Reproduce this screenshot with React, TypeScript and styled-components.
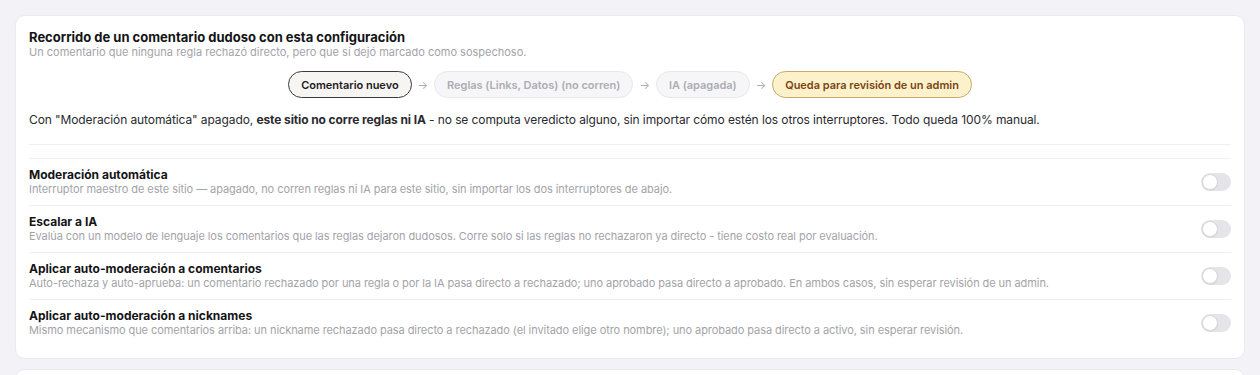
import React from "react";
import styled, { createGlobalStyle } from "styled-components";

const GlobalStyle = createGlobalStyle`
  html, body {
    margin: 0;
    padding: 0;
    background: #f3f3f7;
    font-family: Inter, "Noto Sans", "Liberation Sans", sans-serif;
    -webkit-font-smoothing: antialiased;
  }
`;

const Page = styled.div`
  padding: 15px;
  display: flex;
  flex-direction: column;
  gap: 10px;
`;

const Card = styled.section`
  background: #ffffff;
  border: 1px solid #ebebef;
  border-radius: 10px;
  padding: 13px 13px 12px;
`;

const Intro = styled.div`
  padding-bottom: 15px;
  border-bottom: 1px solid #f0f0f3;
`;

const Title = styled.h3`
  margin: 0;
  font-size: 13px;
  line-height: 16px;
  font-weight: 700;
  color: #141416;
`;

const Subtitle = styled.p`
  margin: 0;
  font-size: 11px;
  line-height: 15px;
  color: #a3a3a9;
`;

const Flow = styled.div`
  display: flex;
  justify-content: center;
  align-items: center;
  gap: 6px;
  margin-top: 11px;
`;

type Tone = "start" | "off" | "end";

const Pill = styled.span<{ $tone: Tone }>`
  display: inline-flex;
  align-items: center;
  height: 27px;
  box-sizing: border-box;
  padding: 0 12px;
  border-radius: 999px;
  font-size: 11px;
  font-weight: 600;
  letter-spacing: -0.02px;
  white-space: nowrap;
  border: 1px solid
    ${({ $tone }) => ($tone === "start" ? "#3a3a3e" : $tone === "end" ? "#caa868" : "#e8e8ec")};
  background: ${({ $tone }) => ($tone === "start" ? "#f7f5f2" : $tone === "end" ? "#fdf1cc" : "#f6f6f8")};
  color: ${({ $tone }) => ($tone === "start" ? "#1b1b1e" : $tone === "end" ? "#7a4513" : "#adadb3")};
`;

const Arrow = styled.span`
  font-size: 11px;
  color: #aeaeb4;
`;

const Note = styled.p`
  margin: 13px 0 0;
  font-size: 12px;
  line-height: 18px;
  letter-spacing: -0.1px;
  color: #2a2a2e;

  strong {
    font-weight: 700;
  }
`;

const Rows = styled.div`
  margin-top: 13px;
`;

const Row = styled.div`
  display: flex;
  align-items: center;
  gap: 16px;
  padding: 8px 0;
  border-top: 1px solid #f0f0f3;
`;

const RowText = styled.div`
  flex: 1;
`;

const RowTitle = styled.div`
  font-size: 12px;
  line-height: 15px;
  font-weight: 700;
  color: #141416;
`;

const RowDesc = styled.div`
  font-size: 11px;
  line-height: 15px;
  letter-spacing: -0.07px;
  color: #a3a3a9;
`;

const Track = styled.span<{ $on: boolean }>`
  position: relative;
  flex: none;
  width: 30px;
  height: 18px;
  border-radius: 9px;
  background: ${({ $on }) => ($on ? "#34c759" : "#e5e5e9")};
`;

const Knob = styled.span<{ $on: boolean }>`
  position: absolute;
  top: 1px;
  left: ${({ $on }) => ($on ? "13px" : "1px")};
  width: 16px;
  height: 16px;
  box-sizing: border-box;
  border-radius: 50%;
  background: #ffffff;
  border: 1px solid #d6d6db;
  box-shadow: 0 1px 1px rgba(0, 0, 0, 0.06);
`;

const Switch: React.FC<{ on: boolean }> = ({ on }) => (
  <Track $on={on}>
    <Knob $on={on} />
  </Track>
);

const steps: { label: string; tone: Tone }[] = [
  { label: "Comentario nuevo", tone: "start" },
  { label: "Reglas (Links, Datos) (no corren)", tone: "off" },
  { label: "IA (apagada)", tone: "off" },
  { label: "Queda para revisión de un admin", tone: "end" },
];

const settings = [
  {
    title: "Moderación automática",
    desc: "Interruptor maestro de este sitio — apagado, no corren reglas ni IA para este sitio, sin importar los dos interruptores de abajo.",
  },
  {
    title: "Escalar a IA",
    desc: "Evalúa con un modelo de lenguaje los comentarios que las reglas dejaron dudosos. Corre solo si las reglas no rechazaron ya directo - tiene costo real por evaluación.",
  },
  {
    title: "Aplicar auto-moderación a comentarios",
    desc: "Auto-rechaza y auto-aprueba: un comentario rechazado por una regla o por la IA pasa directo a rechazado; uno aprobado pasa directo a aprobado. En ambos casos, sin esperar revisión de un admin.",
  },
  {
    title: "Aplicar auto-moderación a nicknames",
    desc: "Mismo mecanismo que comentarios arriba: un nickname rechazado pasa directo a rechazado (el invitado elige otro nombre); uno aprobado pasa directo a activo, sin esperar revisión.",
  },
];

export default function App() {
  return (
    <>
      <GlobalStyle />
      <Page>
        <Card>
          <Intro>
            <Title>Recorrido de un comentario dudoso con esta configuración</Title>
            <Subtitle>
              Un comentario que ninguna regla rechazó directo, pero que sí dejó marcado como sospechoso.
            </Subtitle>
            <Flow>
              {steps.map((s, i) => (
                <React.Fragment key={s.label}>
                  {i > 0 && <Arrow>→</Arrow>}
                  <Pill $tone={s.tone}>{s.label}</Pill>
                </React.Fragment>
              ))}
            </Flow>
            <Note>
              Con "Moderación automática" apagado, <strong>este sitio no corre reglas ni IA</strong> - no se
              computa veredicto alguno, sin importar cómo estén los otros interruptores. Todo queda 100% manual.
            </Note>
          </Intro>
          <Rows>
            {settings.map((s) => (
              <Row key={s.title}>
                <RowText>
                  <RowTitle>{s.title}</RowTitle>
                  <RowDesc>{s.desc}</RowDesc>
                </RowText>
                <Switch on={false} />
              </Row>
            ))}
          </Rows>
        </Card>
        <Card />
      </Page>
    </>
  );
}
